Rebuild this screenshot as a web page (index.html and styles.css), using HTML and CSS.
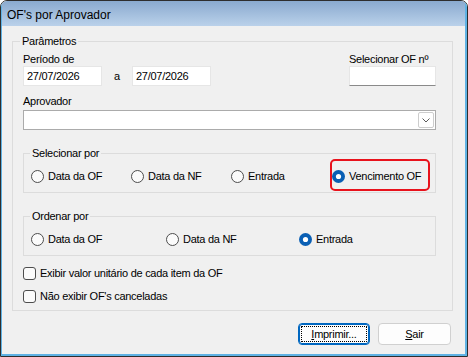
FILE: index.html
```html
<!DOCTYPE html>
<html lang="pt">
<head>
<meta charset="utf-8">
<title>OF's por Aprovador</title>
<link rel="stylesheet" href="styles.css">
</head>
<body>
<div class="window">
  <div class="frame">
    <div class="titlebar">OF's por Aprovador</div>
    <div class="client">
      <fieldset class="group params">
        <legend>Parâmetros</legend>
        <div class="row-period">
          <div class="period">
            <div class="label">Período de</div>
            <div class="dates">
              <div class="input date">27/07/2026</div>
              <span class="sep">a</span>
              <div class="input date">27/07/2026</div>
            </div>
          </div>
          <div class="ofnum">
            <div class="label">Selecionar OF nº</div>
            <div class="input num"></div>
          </div>
        </div>
        <div class="label aprov-label">Aprovador</div>
        <div class="combo">
          <span class="combo-btn">
            <svg width="14" height="14" viewBox="0 0 14 14"><path d="M3.5 5.5 L7 9 L10.5 5.5" fill="none" stroke="#5a5a5a" stroke-width="1"/></svg>
          </span>
        </div>

        <fieldset class="group sub">
          <legend>Selecionar por</legend>
          <div class="radios sel-radios">
            <label class="radio"><svg class="rb" width="13" height="13" viewBox="0 0 13 13"><circle cx="6.5" cy="6.5" r="6" fill="#fbfbfb" stroke="#4d4d4d"/></svg><span>Data da OF</span></label>
            <label class="radio"><svg class="rb" width="13" height="13" viewBox="0 0 13 13"><circle cx="6.5" cy="6.5" r="6" fill="#fbfbfb" stroke="#4d4d4d"/></svg><span>Data da NF</span></label>
            <label class="radio"><svg class="rb" width="13" height="13" viewBox="0 0 13 13"><circle cx="6.5" cy="6.5" r="6" fill="#fbfbfb" stroke="#4d4d4d"/></svg><span>Entrada</span></label>
            <label class="radio hl"><svg class="rb" width="13" height="13" viewBox="0 0 13 13"><circle cx="6.5" cy="6.5" r="6.5" fill="#0a5fb4"/><circle cx="6.5" cy="6.5" r="2.6" fill="#fff"/></svg><span>Vencimento OF</span></label>
          </div>
        </fieldset>

        <fieldset class="group sub">
          <legend>Ordenar por</legend>
          <div class="radios ord-radios">
            <label class="radio"><svg class="rb" width="13" height="13" viewBox="0 0 13 13"><circle cx="6.5" cy="6.5" r="6" fill="#fbfbfb" stroke="#4d4d4d"/></svg><span>Data da OF</span></label>
            <label class="radio"><svg class="rb" width="13" height="13" viewBox="0 0 13 13"><circle cx="6.5" cy="6.5" r="6" fill="#fbfbfb" stroke="#4d4d4d"/></svg><span>Data da NF</span></label>
            <label class="radio"><svg class="rb" width="13" height="13" viewBox="0 0 13 13"><circle cx="6.5" cy="6.5" r="6.5" fill="#0a5fb4"/><circle cx="6.5" cy="6.5" r="2.6" fill="#fff"/></svg><span>Entrada</span></label>
          </div>
        </fieldset>

        <div class="checks">
          <label class="check"><svg width="13" height="13" viewBox="0 0 13 13"><rect x="0.5" y="0.5" width="12" height="12" rx="2.5" fill="#fbfbfb" stroke="#4d4d4d"/></svg><span>Exibir valor unitário de cada item da OF</span></label>
          <label class="check"><svg width="13" height="13" viewBox="0 0 13 13"><rect x="0.5" y="0.5" width="12" height="12" rx="2.5" fill="#fbfbfb" stroke="#4d4d4d"/></svg><span>Não exibir OF's canceladas</span></label>
        </div>
      </fieldset>

      <div class="buttons">
        <button class="btn focused"><u>I</u>mprimir...</button>
        <button class="btn sair"><u>S</u>air</button>
      </div>
    </div>
  </div>
</div>
</body>
</html>
```
FILE: styles.css
```css
html, body {
  margin: 0;
  padding: 0;
  background: #ffffff;
}

body {
  font-family: "Liberation Sans", Arial, sans-serif;
  font-size: 11px;
  letter-spacing: -0.27px;
  color: #000;
}

.window {
  width: 468px;
  height: 357px;
  box-sizing: border-box;
  border: 1px solid #2e2e2e;
  border-radius: 7px 7px 0 0;
  overflow: hidden;
  background: #f0f0f0;
}

.frame {
  height: 100%;
  box-sizing: border-box;
  border-left: 1px solid #5fb2e4;
  border-right: 2px solid #5fb2e4;
  border-bottom: 2px solid #5fb2e4;
  display: flex;
  flex-direction: column;
}

.titlebar {
  height: 25px;
  flex: none;
  box-sizing: border-box;
  padding: 2px 0 0 5px;
  display: flex;
  align-items: center;
  font-size: 12px;
  letter-spacing: 0;
  background: linear-gradient(#8aaacf, #bad1ea);
  color: #000;
}

.client {
  flex: 1;
  background: #f0f0f0;
  padding: 8px 0 0 10px;
}

.group {
  margin: 0;
  min-width: 0;
  border: 1px solid #dcdcdc;
  box-sizing: border-box;
}

.group legend {
  line-height: 14px;
  padding: 0 2px;
}

.params {
  width: 441px;
  padding: 4px 16px 6px 10px;
}

.params > legend {
  margin-left: -3px;
}

.label {
  line-height: 14px;
  height: 14px;
  white-space: nowrap;
}

.row-period {
  display: flex;
  justify-content: space-between;
  align-items: flex-end;
}

.dates {
  display: flex;
  align-items: center;
}

.input {
  height: 20px;
  box-sizing: border-box;
  background: #fff;
  border: 1px solid #e6e6e6;
  line-height: 18px;
  padding-left: 3px;
}

.date {
  width: 79px;
}

.sep {
  width: 30px;
  text-align: center;
}

.num {
  width: 87px;
  border-bottom-color: #8a8a8a;
}

.aprov-label {
  margin-top: 8px;
}

.combo {
  margin-top: 2px;
  height: 20px;
  box-sizing: border-box;
  background: #fff;
  border: 1px solid #ababab;
  display: flex;
  justify-content: flex-end;
  align-items: center;
  padding-right: 1px;
}

.combo-btn {
  width: 16px;
  height: 16px;
  box-sizing: border-box;
  border: 1px solid #cdcdcd;
  border-radius: 2px;
  display: flex;
  align-items: center;
  justify-content: center;
}

.sub {
  margin-top: 16px;
  padding: 8px 7px 8px 7px;
}

.sub > legend {
  margin-left: -1px;
}

.radios {
  display: grid;
  align-items: center;
}

.sel-radios {
  grid-template-columns: 100px 100px 101px auto;
}

.ord-radios {
  grid-template-columns: 135px 133px auto;
}

.radio,
.check {
  display: flex;
  align-items: center;
  gap: 4px;
  height: 16px;
  white-space: nowrap;
}

.radio svg,
.check svg {
  flex: none;
  display: block;
}

.hl {
  position: relative;
}

.hl::after {
  content: "";
  position: absolute;
  left: -2px;
  top: -9px;
  width: 100px;
  height: 32px;
  box-sizing: border-box;
  border: 2px solid #e8121c;
  border-radius: 5px;
  pointer-events: none;
}

.checks {
  margin-top: 9px;
  display: flex;
  flex-direction: column;
  gap: 7px;
}

.buttons {
  width: 441px;
  box-sizing: border-box;
  padding-right: 2px;
  margin-top: 12px;
  display: flex;
  justify-content: flex-end;
  gap: 8px;
}

.btn {
  height: 22px;
  box-sizing: border-box;
  font-family: "Liberation Sans", Arial, sans-serif;
  font-size: 11px;
  letter-spacing: -0.27px;
  color: #000;
  background: #fdfdfd;
  border: 1px solid #d0d0d0;
  border-radius: 4px;
  padding: 0;
  margin: 0;
}

.focused {
  width: 72px;
  border-color: #0067c0;
  box-shadow: inset 0 0 0 1px #0067c0;
  outline: 1px dotted #000;
  outline-offset: -4px;
}

.sair {
  width: 73px;
}
```
